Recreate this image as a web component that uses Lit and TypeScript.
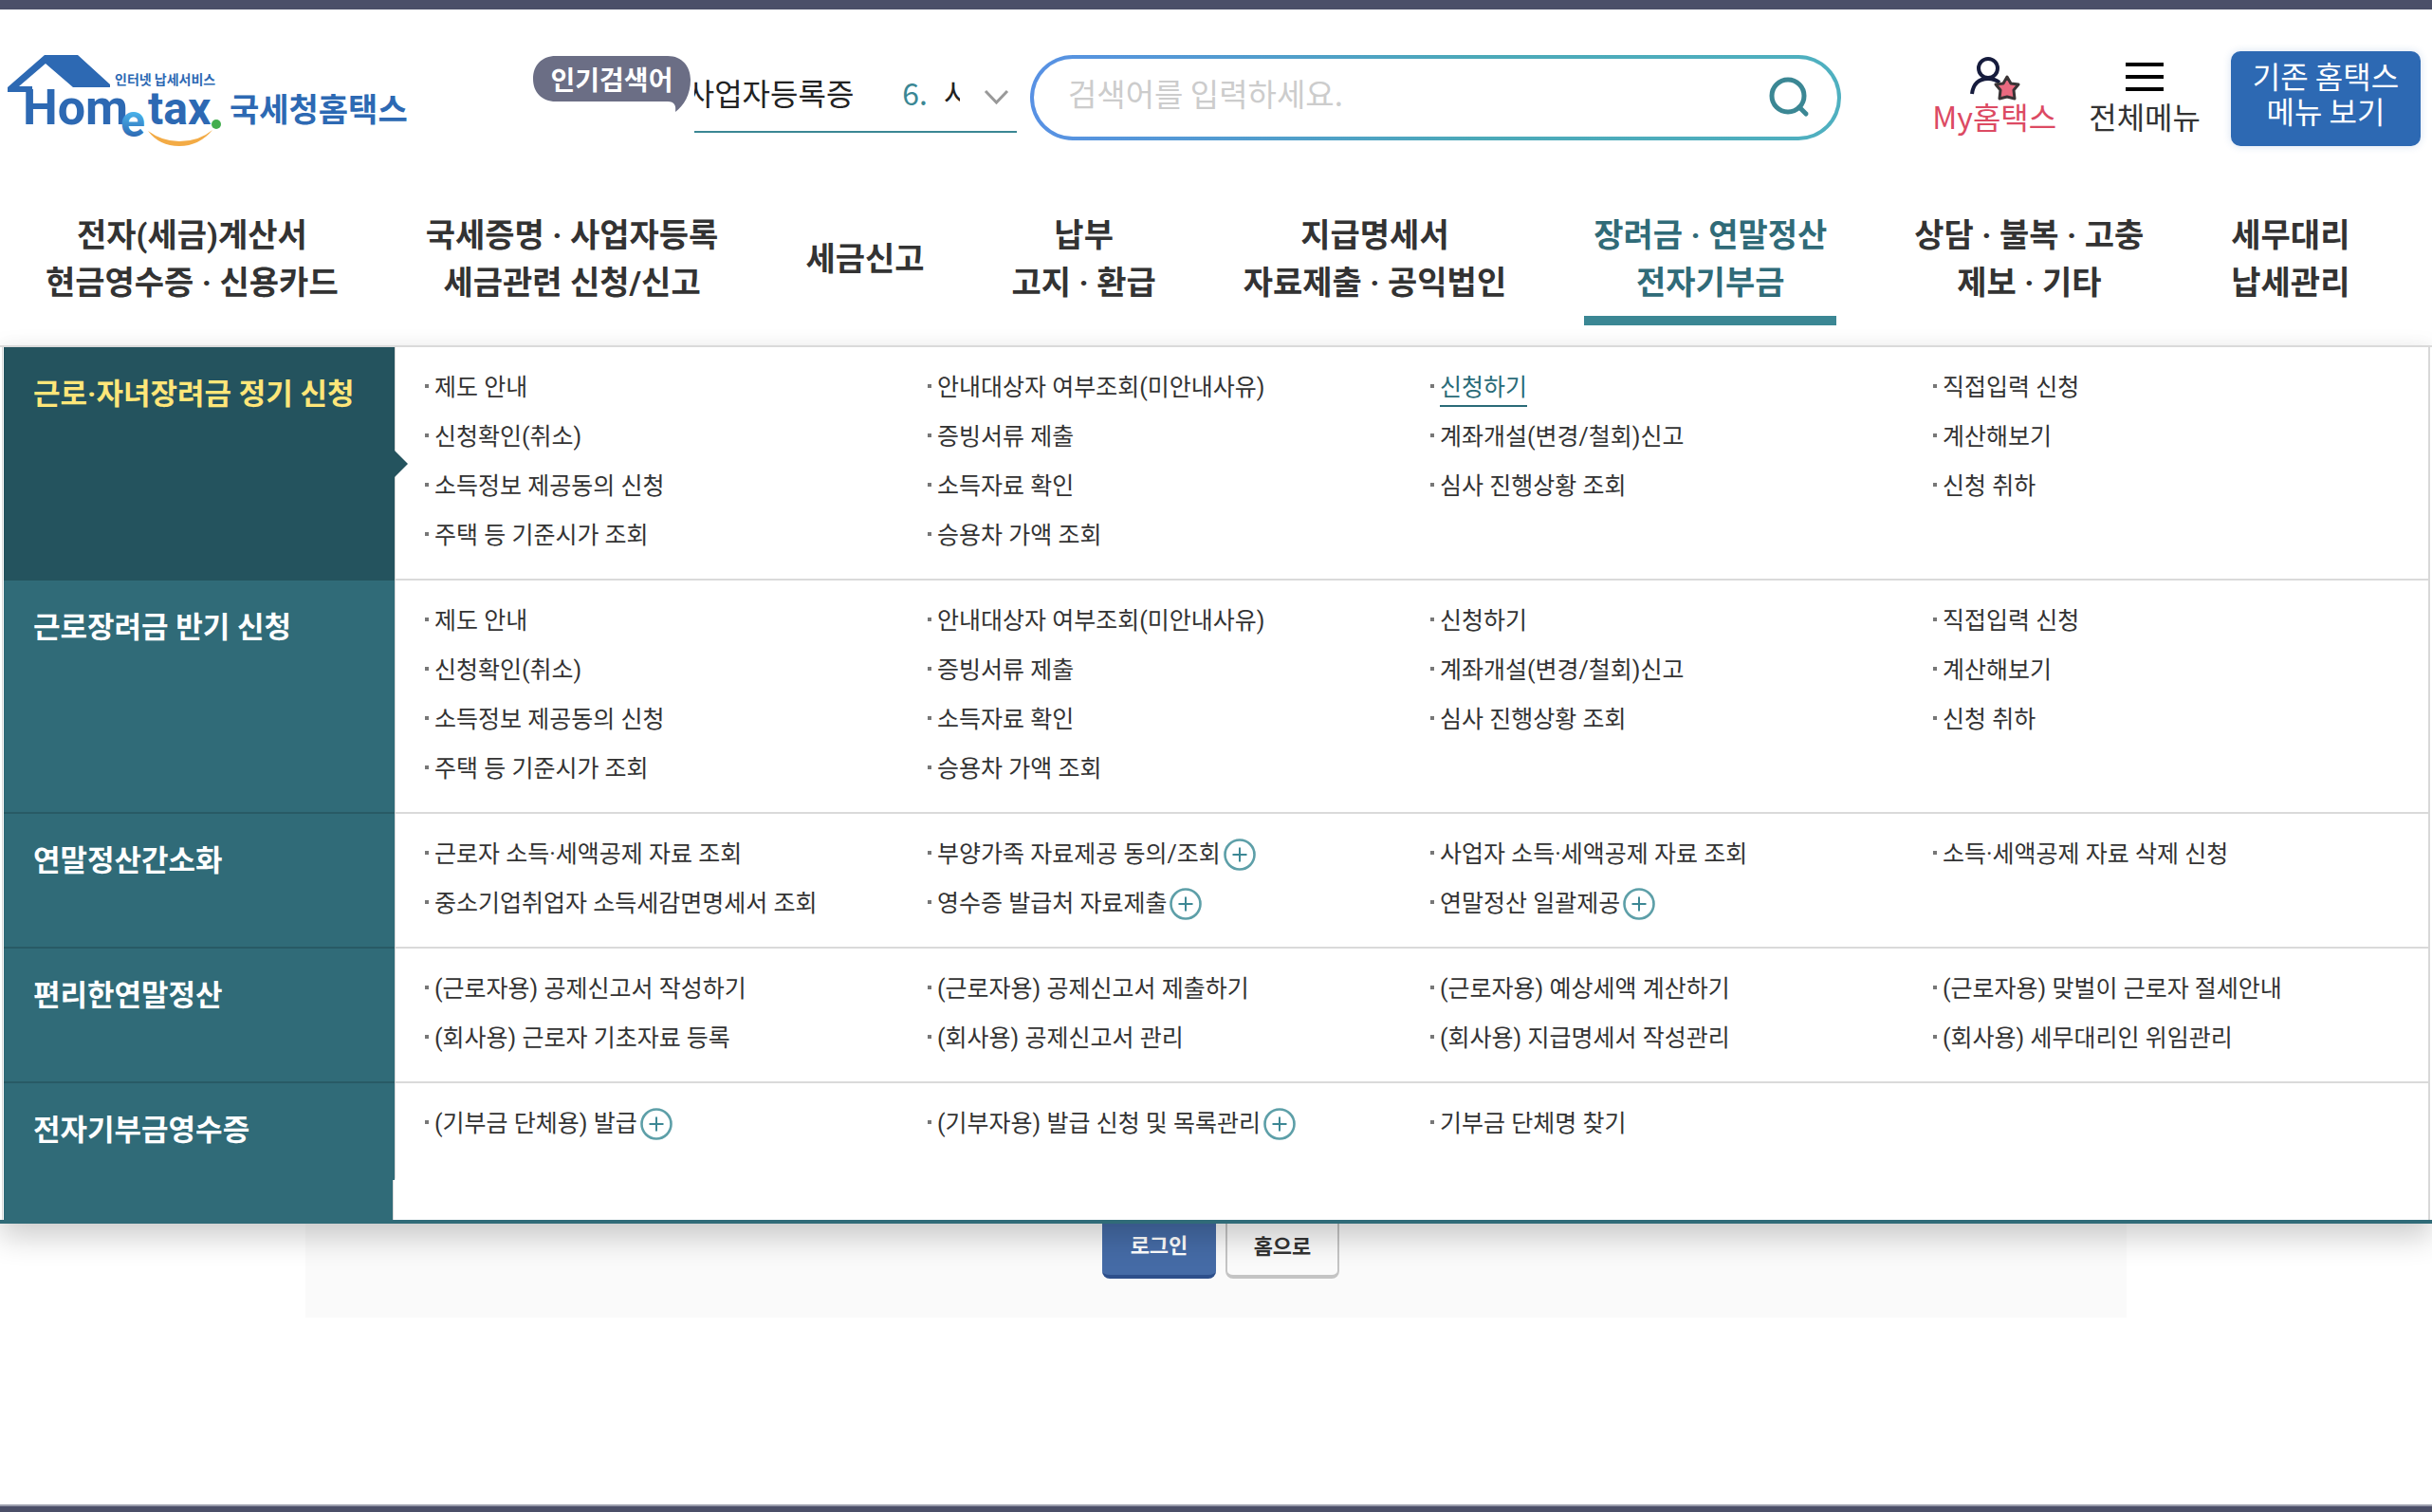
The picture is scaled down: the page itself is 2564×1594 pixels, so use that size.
import { LitElement, html, css, svg, nothing } from "lit";
import { customElement, property } from "lit/decorators.js";
import { classMap } from "lit/directives/class-map.js";

interface MenuLink {
  label: string;
  more?: boolean;
  current?: boolean;
}
interface MenuRow {
  title: string;
  columns: MenuLink[][];
}

const links = (...labels: string[]): MenuLink[] =>
  labels.map((text) => ({
    label: text.replace(/[+*]$/, ""),
    more: text.endsWith("+"),
    current: text.endsWith("*"),
  }));

const applyColumns = (current: boolean): MenuLink[][] => [
  links("제도 안내", "신청확인(취소)", "소득정보 제공동의 신청", "주택 등 기준시가 조회"),
  links("안내대상자 여부조회(미안내사유)", "증빙서류 제출", "소득자료 확인", "승용차 가액 조회"),
  links(current ? "신청하기*" : "신청하기", "계좌개설(변경/철회)신고", "심사 진행상황 조회"),
  links("직접입력 신청", "계산해보기", "신청 취하"),
];

const ROWS: MenuRow[] = [
  { title: "근로·자녀장려금 정기 신청", columns: applyColumns(true) },
  { title: "근로장려금 반기 신청", columns: applyColumns(false) },
  {
    title: "연말정산간소화",
    columns: [
      links("근로자 소득·세액공제 자료 조회", "중소기업취업자 소득세감면명세서 조회"),
      links("부양가족 자료제공 동의/조회+", "영수증 발급처 자료제출+"),
      links("사업자 소득·세액공제 자료 조회", "연말정산 일괄제공+"),
      links("소득·세액공제 자료 삭제 신청"),
    ],
  },
  {
    title: "편리한연말정산",
    columns: [
      links("(근로자용) 공제신고서 작성하기", "(회사용) 근로자 기초자료 등록"),
      links("(근로자용) 공제신고서 제출하기", "(회사용) 공제신고서 관리"),
      links("(근로자용) 예상세액 계산하기", "(회사용) 지급명세서 작성관리"),
      links("(근로자용) 맞벌이 근로자 절세안내", "(회사용) 세무대리인 위임관리"),
    ],
  },
  {
    title: "전자기부금영수증",
    columns: [
      links("(기부금 단체용) 발급+"),
      links("(기부자용) 발급 신청 및 목록관리+"),
      links("기부금 단체명 찾기"),
      [],
    ],
  },
];

const NAV: string[][] = [
  ["전자(세금)계산서", "현금영수증 · 신용카드"],
  ["국세증명 · 사업자등록", "세금관련 신청/신고"],
  ["세금신고"],
  ["납부", "고지 · 환급"],
  ["지급명세서", "자료제출 · 공익법인"],
  ["장려금 · 연말정산", "전자기부금"],
  ["상담 · 불복 · 고충", "제보 · 기타"],
  ["세무대리", "납세관리"],
];
const ACTIVE_NAV = 5;

const plusIcon = svg`
  <svg class="plus" viewBox="0 0 34 34" width="34" height="34" aria-hidden="true">
    <circle cx="17" cy="17" r="15.5" fill="#fff" stroke="#5d9fa8" stroke-width="2.6"/>
    <path d="M17 9.5V24.5M9.5 17H24.5" stroke="#3c8794" stroke-width="2"/>
  </svg>`;

@customElement("site-logo")
export class SiteLogo extends LitElement {
  static styles = css`
    :host { display: block; }
    svg { display: block; }
    .word { font-family: "Roboto", sans-serif; font-weight: 700; }
    .ko { font-family: "Noto Sans CJK KR", sans-serif; font-weight: 700; }
  `;
  render() {
    return html`
      <svg width="430" height="110" viewBox="0 50 430 110" role="img" aria-label="Hometax 국세청홈택스">
        <defs>
          <linearGradient id="e" x1="0" y1="0" x2="0" y2="1">
            <stop offset="0.3" stop-color="#4db8ee"/>
            <stop offset="0.8" stop-color="#2d69b3"/>
          </linearGradient>
        </defs>
        <path d="M47 58H82L116 89V92H77L48 67L20 91H34V97H8V92Z" fill="#2d69b3"/>
        <text class="word" x="24" y="131" font-size="52" fill="#2d69b3">Hom</text>
        <text class="word" x="127" y="144" font-size="48" fill="url(#e)">e</text>
        <text class="word" x="156" y="131" font-size="48" fill="#2d69b3">tax</text>
        <text class="ko" x="121" y="89" font-size="14" fill="#2d69b3">인터넷 납세서비스</text>
        <circle cx="228" cy="131" r="5" fill="#43ae4f"/>
        <path d="M156 138Q168 154 189 154Q210 154 224 137Q210 149 189 149Q171 149 156 138Z" fill="#f3ab45"/>
        <text class="ko" x="242" y="128" font-size="34" fill="#2d69b3">국세청홈택스</text>
      </svg>`;
  }
}

@customElement("menu-row")
export class MenuRowElement extends LitElement {
  @property({ attribute: false }) row!: MenuRow;
  @property({ type: Boolean }) active = false;

  static styles = css`
    :host {
      display: grid;
      grid-template-columns: 412px 1fr;
      font-family: "Roboto", "Noto Sans CJK KR", sans-serif;
    }
    h2 {
      position: relative;
      margin: 0;
      padding: 26px 0 0 31px;
      font-size: 31px;
      line-height: 48px;
      font-weight: 700;
      color: #fff;
      background: #306b78;
      border-bottom: 2px solid #285a65;
      white-space: nowrap;
    }
    h2.active { color: #ffe679; background: #24535e; border-color: #24535e; }
    h2.active::after {
      content: "";
      position: absolute;
      left: 100%;
      top: 50%;
      margin-top: -13px;
      border: solid transparent;
      border-width: 14px 0 14px 14px;
      border-left-color: #24535e;
      z-index: 1;
    }
    :host(:last-of-type) h2 { border-bottom-color: #306b78; }
    :host(:last-of-type) .columns { border-bottom-color: #fff; padding-bottom: 33px; }
    .columns {
      display: grid;
      grid-template-columns: repeat(4, minmax(0, 1fr));
      column-gap: 8px;
      padding: 15px 0 21px 31px;
      border-left: 1px solid #d8d8d8;
      border-bottom: 2px solid #dadada;
    }
    ul { margin: 0; padding: 0; list-style: none; }
    li { display: flex; align-items: center; height: 52px; white-space: nowrap; }
    li::before { content: ""; width: 4px; height: 4px; margin-right: 6px; background: #777; }
    a { padding-top: 4px; font-size: 25px; line-height: 36px; color: #333; text-decoration: none; }
    a.current { color: #2a6b78; box-shadow: 0 2px #2a6b78; }
    .plus { display: block; margin: 4px 0 0 3px; }
  `;

  render() {
    return html`
      <h2 class=${classMap({ active: this.active })}>${this.row.title}</h2>
      <div class="columns">
        ${this.row.columns.map(
          (column) => html`<ul>
            ${column.map(
              (link) => html`<li>
                <a href="#" class=${classMap({ current: !!link.current })}>${link.label}</a>${link.more ? plusIcon : nothing}
              </li>`
            )}
          </ul>`
        )}
      </div>`;
  }
}

@customElement("app-root")
export class AppRoot extends LitElement {
  static styles = css`
    :host {
      display: flex;
      flex-direction: column;
      min-height: 100vh;
      box-sizing: border-box;
      border-top: 10px solid #4b4f68;
      border-bottom: 6px solid #4b4f68;
      background: #fff;
      color: #333;
      font-family: "Noto Sans CJK KR", sans-serif;
      overflow: hidden;
    }
    * { box-sizing: border-box; }
    a { color: inherit; text-decoration: none; }
    button { font-family: inherit; cursor: pointer; }

    .header { display: flex; align-items: flex-start; padding: 40px 12px 0 0; height: 190px; }
    .popular { display: flex; margin-left: 132px; }
    .bubble { position: relative; height: 60px; width: 170px; }
    .bubble svg { display: block; }
    .bubble span {
      position: absolute;
      inset: 11px 4px auto 0;
      font-size: 28px;
      line-height: 44px;
      font-weight: 700;
      text-align: center;
      color: #fff;
    }
    .ticker {
      display: flex;
      align-items: center;
      width: 340px;
      height: 90px;
      padding-top: 6px;
      border-bottom: 2px solid #3b8794;
      font-size: 32px;
      line-height: 48px;
      color: #222;
    }
    .words { display: flex; width: 280px; justify-content: flex-end; overflow: hidden; white-space: nowrap; }
    .words span, .words b { flex: none; }
    .words b { margin: 0 17px 0 51px; font-weight: 400; color: #3b8794; }
    .words .cut { width: 17px; overflow: hidden; }
    .toggle { width: 60px; height: 48px; padding: 10px 0 0 24px; border: 0; background: none; }
    .search {
      display: flex;
      align-items: center;
      flex: 1;
      max-width: 855px;
      height: 90px;
      margin: 8px 0 0 14px;
      padding: 0 28px 0 36px;
      border: 4px solid transparent;
      border-radius: 45px;
      background:
        linear-gradient(#fff, #fff) padding-box,
        linear-gradient(90deg, #5891e4, #4ba9b8 55%, #4fb0c0) border-box;
    }
    .search input {
      flex: 1;
      min-width: 0;
      padding: 0 0 10px;
      border: 0;
      outline: 0;
      background: none;
      font: 33px/48px "Noto Sans CJK KR", sans-serif;
      color: #333;
    }
    .search input::placeholder { color: #ccc; opacity: 1; }
    .search button { padding: 0; border: 0; background: none; }
    .search svg, .quick svg, .toggle svg { display: block; }
    .quick { display: flex; gap: 34px; margin: 10px 0 0 auto; }
    .quick a {
      display: flex;
      flex-direction: column;
      align-items: center;
      font-size: 32px;
      line-height: 38px;
      white-space: nowrap;
    }
    .my { color: #dc4a63; }
    .classic {
      width: 200px;
      height: 100px;
      margin: 4px 0 0 32px;
      padding: 0 0 12px;
      border: 0;
      border-radius: 10px;
      background: #2d69b3;
      color: #fff;
      font-size: 32px;
      line-height: 37px;
      box-shadow: 0 0 8px rgba(45, 105, 179, 0.2);
    }

    .nav { display: flex; gap: 72px; padding: 20px 38px 0; height: 164px; }
    .nav a {
      display: flex;
      flex-direction: column;
      align-items: center;
      justify-content: center;
      height: 123px;
      padding: 0 10px 8px;
      border-bottom: 10px solid transparent;
      font-family: "Roboto", "Noto Sans CJK KR", sans-serif;
      font-size: 34px;
      line-height: 50px;
      font-weight: 700;
      white-space: nowrap;
    }
    .nav a.on { color: #306b78; border-color: #3b8794; }

    .mega {
      position: relative;
      z-index: 1;
      border-top: 2px solid #dadada;
      border-bottom: 4px solid #306b78;
      background: #fff;
      box-shadow: 0 14px 30px rgba(0, 0, 0, 0.2), 0 -4px 16px rgba(0, 0, 0, 0.02);
    }
    .rows { margin: 0 2px; padding-left: 1px; border: solid #d8d8d8; border-width: 0 2px 0 1px; }
    .tail { width: 411px; height: 42px; background: #306b78; border-right: 1px solid #d8d8d8; }

    .login {
      display: flex;
      justify-content: center;
      align-items: flex-start;
      gap: 10px;
      width: min(1920px, 100%);
      height: 129px;
      margin: -30px auto 0;
      padding-left: 10px;
      background: #fafafa;
    }
    .login button {
      width: 120px;
      height: 88px;
      padding: 18px 0 0;
      border: 0;
      border-bottom: 4px solid #2d4f8b;
      border-radius: 8px;
      background: #456ba6;
      color: #fff;
      font-size: 22px;
      font-weight: 700;
    }
    .login .home { border: 2px solid #c4c4c4; border-bottom-width: 4px; background: #fafafa; color: #333; }
    .footer { height: 2px; margin-top: auto; background: #9a9dac; }
  `;

  render() {
    return html`
      <header class="header">
        <a href="#"><site-logo></site-logo></a>
        <div class="popular">
          <div class="bubble">
            <svg width="170" height="70" viewBox="0 0 170 70" aria-hidden="true">
              <path d="M24 9H142C157 9 166 20 166 34C166 50 159 61 150 68C151 61 149 57 142 57H24C9 57 0 47 0 33C0 19 9 9 24 9Z" fill="#6b6e85"/>
            </svg>
            <span>인기검색어</span>
          </div>
          <div class="ticker">
            <div class="words"><span>사업자등록증</span><b>6.</b><span class="cut">사</span></div>
            <button class="toggle" aria-label="인기검색어 펼치기">
              <svg width="30" height="24" viewBox="0 0 30 24" aria-hidden="true">
                <path d="M3 6L14.5 18L26 6" fill="none" stroke="#999" stroke-width="3"/>
              </svg>
            </button>
          </div>
        </div>
        <form class="search" role="search">
          <input type="text" aria-label="검색어" placeholder="검색어를 입력하세요." />
          <button type="button" aria-label="검색">
            <svg width="44" height="44" viewBox="0 0 44 44" aria-hidden="true">
              <circle cx="20" cy="20" r="17" fill="none" stroke="#3b8794" stroke-width="5"/>
              <path d="M32 32L39 39" stroke="#3b8794" stroke-width="5" stroke-linecap="round"/>
            </svg>
          </button>
        </form>
        <nav class="quick">
          <a class="my" href="#">
            <svg width="52" height="43" viewBox="0 0 52 43" overflow="visible" aria-hidden="true">
              <circle cx="19" cy="12" r="10" fill="none" stroke="#161c3d" stroke-width="4"/>
              <path d="M2 39Q4 23 19 23Q26 23 31 27" fill="none" stroke="#161c3d" stroke-width="4"/>
              <path d="M39 21L43 28L51 29L46 35L47 44L39 42L31 44L32 35L27 29L35 28Z" fill="#ea6a80" stroke="#3a3436" stroke-width="3" stroke-linejoin="round"/>
            </svg>
            My홈택스
          </a>
          <a href="#">
            <svg width="42" height="43" viewBox="0 0 42 43" aria-hidden="true">
              <path d="M1 8H41M1 21H41M1 34H41" stroke="#000" stroke-width="4"/>
            </svg>
            전체메뉴
          </a>
        </nav>
        <button class="classic">기존 홈택스<br />메뉴 보기</button>
      </header>

      <nav class="nav">
        ${NAV.map(
          (lines, i) => html`<a href="#" class=${classMap({ on: i === ACTIVE_NAV })}>
            ${lines.map((line) => html`<span>${line}</span>`)}
          </a>`
        )}
      </nav>

      <section class="mega">
        <div class="rows">
          ${ROWS.map((row, i) => html`<menu-row .row=${row} ?active=${i === 0}></menu-row>`)}
          <div class="tail"></div>
        </div>
      </section>

      <main class="login">
        <button>로그인</button>
        <button class="home">홈으로</button>
      </main>
      <div class="footer"></div>
    `;
  }
}
